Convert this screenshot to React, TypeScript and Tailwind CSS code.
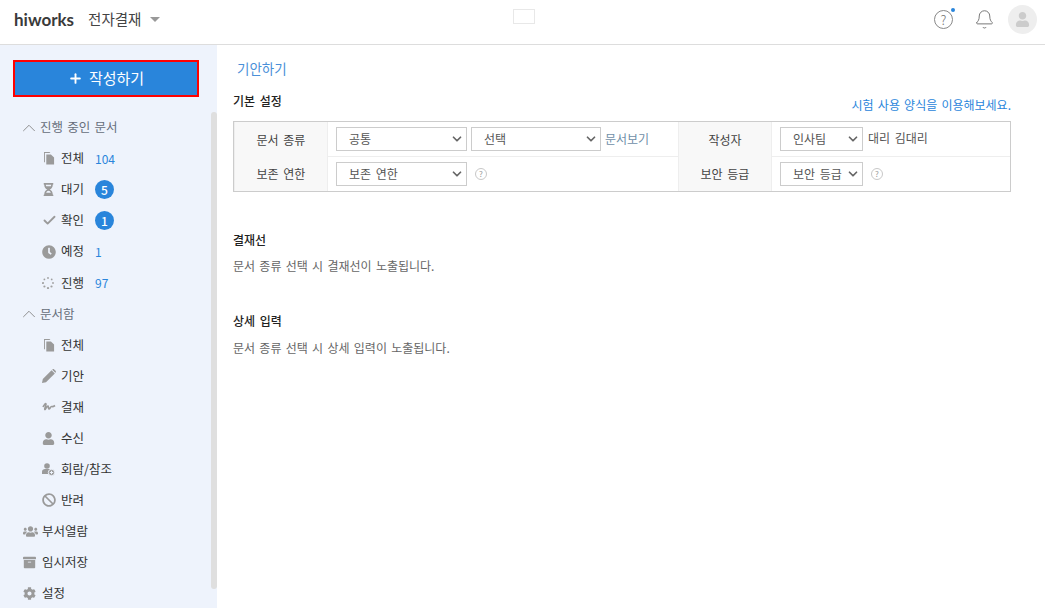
import React from 'react';
import { FaHourglassHalf, FaClock, FaUser, FaUsers, FaArchive, FaCog, FaBan } from 'react-icons/fa';
import { Check, ChevronUp, ChevronDown, Plus, Bell } from 'lucide-react';

const DocsIcon = () => (
  <svg width="11" height="13" viewBox="0 0 12 14" fill="#9a9a9a" className="ml-[2px]">
    <path d="M0 0h6l1 1H1v10H0z" />
    <path d="M2.500 2.500h5l3.500 3.500v7.500H2.500z" />
  </svg>
);

const PenIcon = () => (
  <svg width="14" height="14" viewBox="0 0 14 14" fill="#9a9a9a">
    <path d="M0 14l.8-4L9.600 1.200l3.200 3.200L4 13.200z" />
    <path d="M10.500.4c.5-.5 1.200-.5 1.700 0l1.400 1.400c.5.500.5 1.200 0 1.700l-.3.300-3.100-3.100z" />
  </svg>
);

const SignIcon = () => (
  <svg width="14" height="10" viewBox="0 0 14 10" fill="none" stroke="#9a9a9a" strokeWidth="1.600">
    <path d="M1 5c1-2 2.500-3.800 3-3.300.7.700-2 5.300-1.300 5.800C3.500 8 5 3.500 6 4c.8.400 0 3 1 3s1.500-2.500 2.500-2.500 1 .8 3.500-1" />
  </svg>
);

const DotsIcon = () => (
  <svg width="12" height="12" viewBox="0 0 12 12" fill="#a0a0a0">
    <circle cx="6" cy="1" r="0.900" />
    <circle cx="9.700" cy="2.400" r="0.900" />
    <circle cx="11" cy="6" r="0.900" />
    <circle cx="9.500" cy="9.500" r="1.100" />
    <circle cx="6" cy="11" r="1.100" />
    <circle cx="2.400" cy="9.500" r="1.100" />
    <circle cx="1" cy="6" r="1.100" />
    <circle cx="2.400" cy="2.400" r="0.900" />
  </svg>
);

const UserPlusIcon = () => (
  <svg width="13" height="13" viewBox="0 0 13 13">
    <circle cx="5" cy="3" r="2.800" fill="#9a9a9a" />
    <path d="M0 11V8.500C0 7 1.500 6 3 6h4c1 0 2 .5 2 2v3z" fill="#9a9a9a" />
    <circle cx="9.500" cy="9.500" r="3.200" fill="#9a9a9a" stroke="#eef3fc" />
    <path d="M9.500 7.800v3.400M7.800 9.500h3.400" stroke="#eef3fc" strokeWidth="1" />
  </svg>
);

const HelpDot = () => (
  <span className="flex h-[12px] w-[12px] items-center justify-center rounded-full border border-[#c8c8c8] text-[8px] leading-none text-[#999]">?</span>
);

const Row = ({ icon, label, count, badge }: { icon: React.ReactNode; label: string; count?: number; badge?: number }) => (
  <div className="flex h-[31.100px] items-center pl-[42px] text-[12.500px] text-[#333]">
    <span className="flex w-[19px] shrink-0 items-center justify-start">{icon}</span>
    <span className="w-[34px] whitespace-nowrap">{label}</span>
    {count !== undefined && <span className="text-[12px] text-[#2985db]">{count}</span>}
    {badge !== undefined && (
      <span className="flex h-[19px] w-[19px] items-center justify-center rounded-full bg-[#2985db] text-[12px] font-medium text-white">{badge}</span>
    )}
  </div>
);

const GroupHead = ({ label }: { label: string }) => (
  <div className="flex h-[31px] items-center pl-[17.500px] text-[12.500px] text-[#666e7a] [word-spacing:1.500px]">
    <ChevronUp size={22} strokeWidth={1} color="#888" className="mr-[0.500px]" />
    {label}
  </div>
);

const TopRow = ({ icon, label }: { icon: React.ReactNode; label: string }) => (
  <div className="flex h-[31.100px] items-center pl-[23px] text-[12.500px] text-[#333]">
    <span className="flex w-[19px] shrink-0 items-center">{icon}</span>
    {label}
  </div>
);

const Select = ({ value, width }: { value: string; width: string }) => (
  <span className={`relative block h-[24px] shrink-0 ${width}`}>
    <select defaultValue={value} className="block h-full w-full appearance-none rounded-none border border-[#ccc] bg-white pl-[12px] text-[12px] leading-[16px] text-[#555] outline-none [word-spacing:2px]">
      <option>{value}</option>
    </select>
    <ChevronDown size={14} strokeWidth={3} color="#666" className="pointer-events-none absolute right-[3px] top-[5px]" />
  </span>
);

const Label = ({ children }: { children: React.ReactNode }) => (
  <div className="flex items-center justify-center border-x border-[#eee] bg-[#f8f8f8] text-[12px] text-[#444] [word-spacing:2px]">{children}</div>
);

export default function App() {
  const gray = '#9a9a9a';
  return (
    <div className="flex h-[608px] w-[1045px] flex-col overflow-hidden bg-white font-['Noto_Sans_CJK_KR','Noto_Sans',sans-serif]">
      <header className="relative flex h-[45px] shrink-0 items-center border-b border-[#ddd] pb-[6px] pl-[14px] pr-[8px]">
        <span className="font-['Lato',sans-serif] text-[17px] font-bold leading-none text-[#3a3a3a]">hiworks</span>
        <span className="ml-[14px] text-[14.500px] text-[#444]">전자결재</span>
        <span className="ml-[9px] h-0 w-0 border-x-[5px] border-t-[5px] border-x-transparent border-t-[#999]" />
        <span className="absolute left-[513px] top-[9px] h-[15px] w-[22px] border border-[#e8e8e8]" />
        <div className="ml-auto flex items-center">
          <span className="relative flex h-[19px] w-[19px] items-center justify-center rounded-full border border-[#888] text-[13px] font-light leading-none text-[#777]">
            ?
            <span className="absolute -right-[3px] -top-[3px] h-[4px] w-[4px] rounded-full bg-[#2985db]" />
          </span>
          <Bell size={21} strokeWidth={1} color="#666" className="ml-[21px]" />
          <span className="ml-[13px] flex h-[29px] w-[29px] items-center justify-center overflow-hidden rounded-full bg-[#eee]">
            <FaUser size={15} color="#ccc" />
          </span>
        </div>
      </header>

      <div className="flex min-h-0 flex-1">
        <aside className="relative w-[217px] shrink-0 bg-[#eef3fc]">
          <div className="px-[13px] pt-[15px]">
            <button className="flex h-[37px] w-[186px] items-center justify-center gap-[6px] border-2 border-[#f00] bg-[#2985db] text-[15px] text-white">
              <Plus size={15} strokeWidth={3} />
              작성하기
            </button>
          </div>
          <nav className="mt-[15px]">
            <GroupHead label="진행 중인 문서" />
            <Row icon={<DocsIcon />} label="전체" count={104} />
            <Row icon={<FaHourglassHalf size={13} color={gray} />} label="대기" badge={5} />
            <Row icon={<Check size={15} strokeWidth={3} color={gray} />} label="확인" badge={1} />
            <Row icon={<FaClock size={14} color={gray} />} label="예정" count={1} />
            <Row icon={<DotsIcon />} label="진행" count={97} />
            <GroupHead label="문서함" />
            <Row icon={<DocsIcon />} label="전체" />
            <Row icon={<PenIcon />} label="기안" />
            <Row icon={<SignIcon />} label="결재" />
            <Row icon={<FaUser size={13} color={gray} />} label="수신" />
            <Row icon={<UserPlusIcon />} label="회람/참조" />
            <Row icon={<FaBan size={14} color={gray} />} label="반려" />
            <TopRow icon={<FaUsers size={15} color={gray} />} label="부서열람" />
            <TopRow icon={<FaArchive size={13} color={gray} />} label="임시저장" />
            <TopRow icon={<FaCog size={13} color={gray} />} label="설정" />
          </nav>
          <div className="absolute left-[211px] top-[67px] h-[477px] w-[6px] rounded-[3px] bg-[#dfdfdf]" />
        </aside>

        <main className="min-w-0 flex-1 pl-[16px] pt-[13px] pr-[34px]">
          <h1 className="pl-[4px] text-[13.500px] leading-[20px] text-[#4a8fd8]">기안하기</h1>
          <div className="mt-[15px] flex items-start justify-between">
            <h2 className="text-[12px] font-medium leading-[16px] text-[#222] [word-spacing:2px]">기본 설정</h2>
            <a className="pt-[4px] text-[12px] leading-[16px] text-[#2985db] [word-spacing:1.500px]">시험 사용 양식을 이용해보세요.</a>
          </div>
          <div className="mt-[8px] grid h-[71px] w-[778px] grid-cols-[94px_350px_94px_238px] grid-rows-[35px_34px] border border-[#ccc]">
            <Label>문서 종류</Label>
            <div className="flex items-center border-b border-[#eee] pl-[8px]">
              <Select value="공통" width="w-[131px]" />
              <span className="w-[4px]" />
              <Select value="선택" width="w-[130px]" />
              <span className="ml-[4px] text-[12px] text-[#6f8fa8]">문서보기</span>
            </div>
            <Label>작성자</Label>
            <div className="flex items-center border-b border-[#eee] pl-[8px]">
              <Select value="인사팀" width="w-[83px]" />
              <span className="ml-[5px] -translate-y-[1px] text-[12px] text-[#555] [word-spacing:2px]">대리 김대리</span>
            </div>
            <Label>보존 연한</Label>
            <div className="flex items-center pl-[8px]">
              <Select value="보존 연한" width="w-[131px]" />
              <span className="ml-[8px]"><HelpDot /></span>
            </div>
            <Label>보안 등급</Label>
            <div className="flex items-center pl-[8px]">
              <Select value="보안 등급" width="w-[83px]" />
              <span className="ml-[8px]"><HelpDot /></span>
            </div>
          </div>
          <h2 className="mt-[40px] text-[12px] font-medium leading-[16px] text-[#222]">결재선</h2>
          <p className="mt-[10px] text-[12px] leading-[16px] text-[#666] [word-spacing:1.600px]">문서 종류 선택 시 결재선이 노출됩니다.</p>
          <h2 className="mt-[39px] text-[12px] font-medium leading-[16px] text-[#222] [word-spacing:2px]">상세 입력</h2>
          <p className="mt-[11px] text-[12px] leading-[16px] text-[#666] [word-spacing:1.600px]">문서 종류 선택 시 상세 입력이 노출됩니다.</p>
        </main>
      </div>
    </div>
  );
}
